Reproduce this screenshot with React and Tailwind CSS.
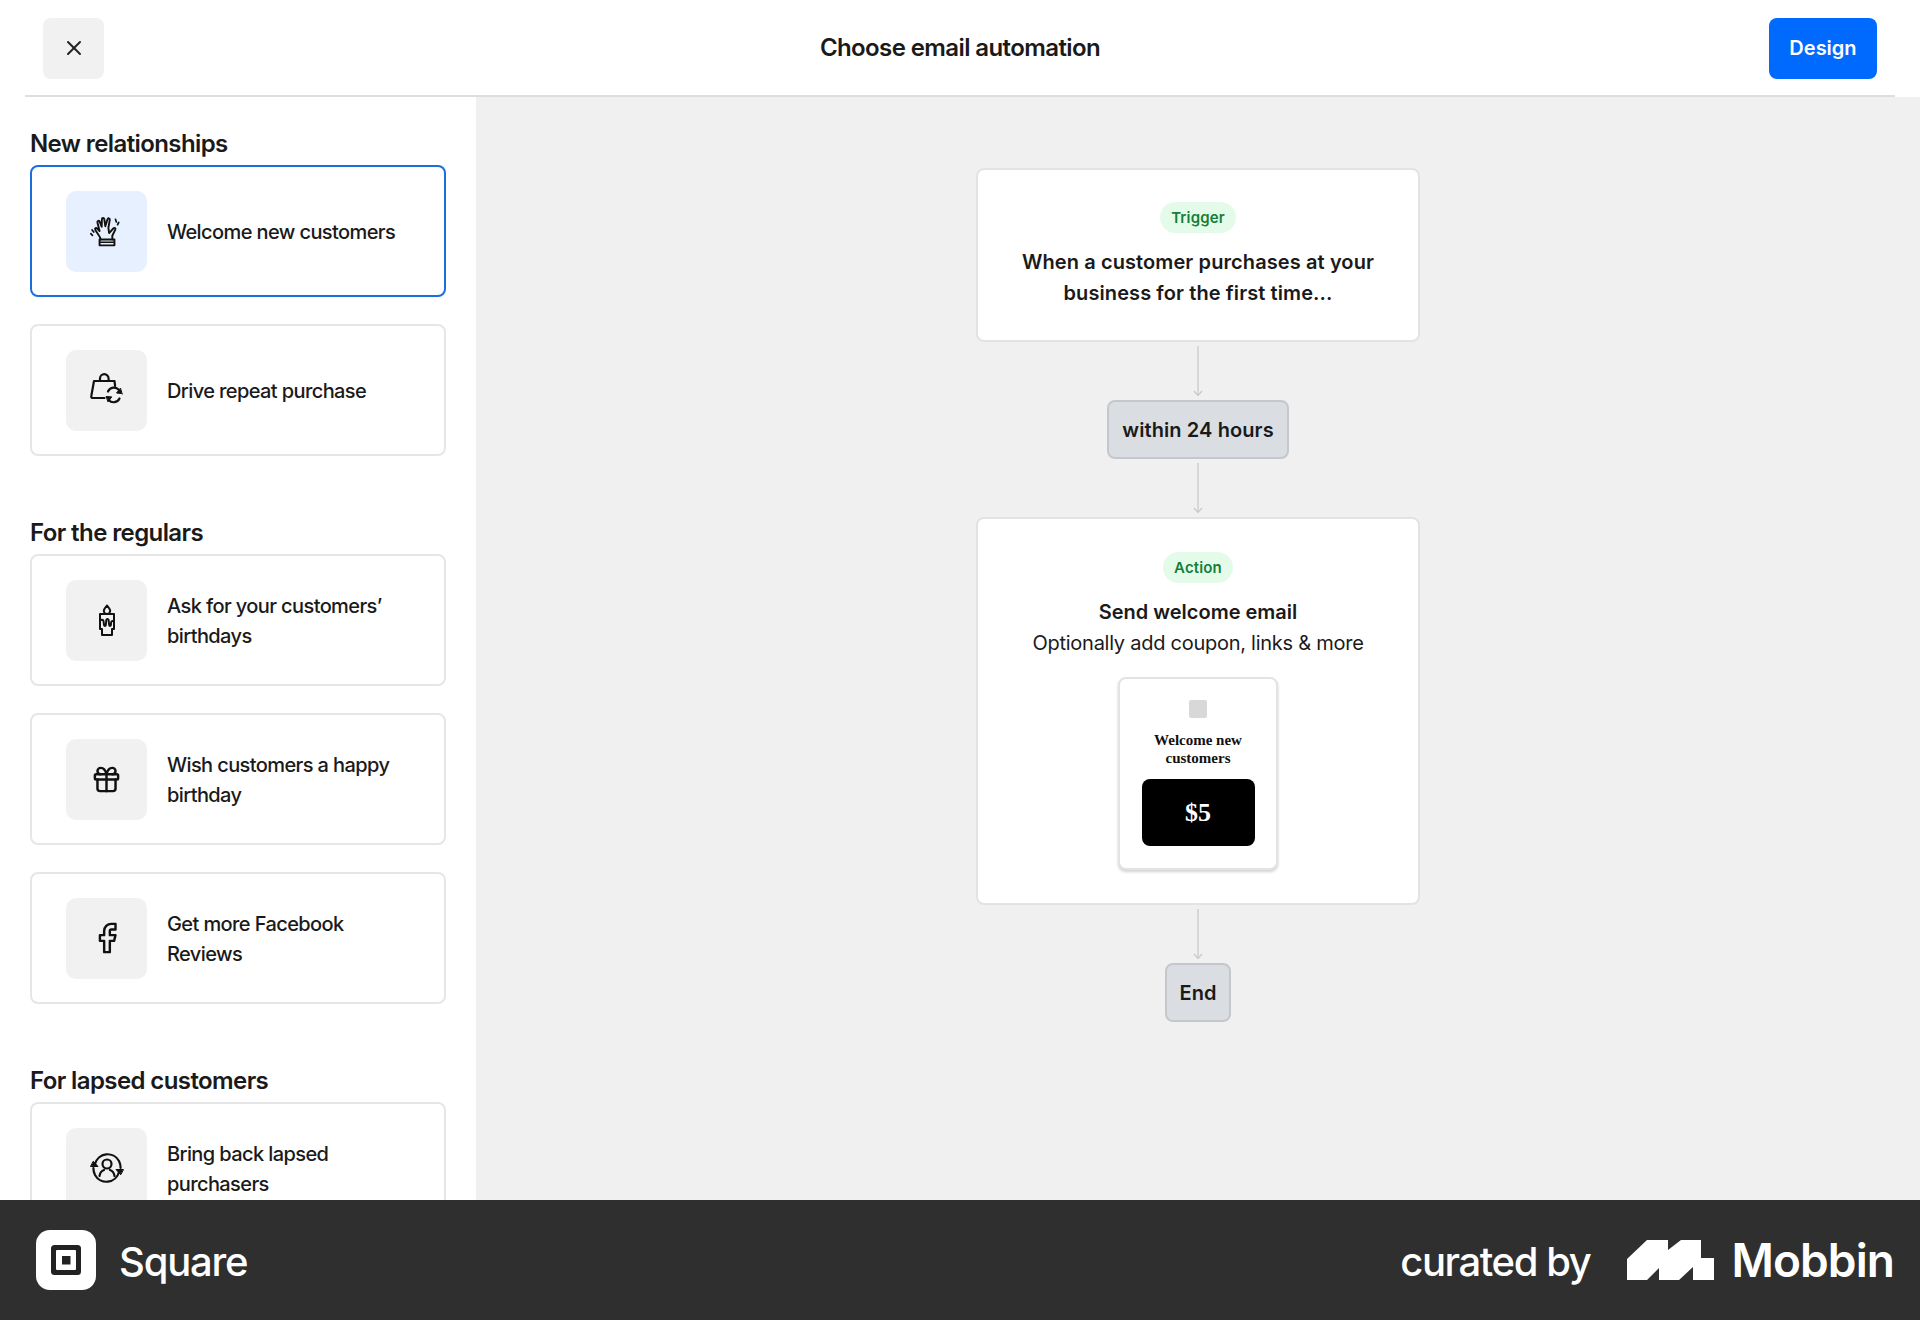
import React from 'react';
import { X, Gift, Facebook } from 'lucide-react';

const inter = { fontFamily: 'Inter, sans-serif' };

const HandIcon = () => (
  <svg width="34" height="34" viewBox="0 0 32 32" fill="none" stroke="#111" strokeWidth="1.8" strokeLinecap="round" strokeLinejoin="round">
    <path d="M10 24c0-3-3-5-5-9-.8-1.600.8-2.400 1.800-1.200L9 16 7 8c-.4-1.600 1.600-2.200 2.200-.6L11 12l.2-7c0-1.600 2-1.600 2.300 0l.9 6.500L16.500 5c.5-1.500 2.400-1 2.100.5L17.300 13l.7 5 4-4.500c1-1 2.400 0 1.800 1.200L21 20.500V24" />
    <path d="M9 24h14v5.500H9z" />
    <path d="M9.500 26.500h13" strokeWidth="1.400" />
    <path d="M2 15l1.500 2M.8 18.500l1.500 1.600M24 5l.8 2.500M27 8l-1 2" strokeWidth="1.600" />
  </svg>
);

const BagIcon = () => (
  <svg width="34" height="34" viewBox="0 0 34 34" fill="none" stroke="#111" strokeWidth="2.200" strokeLinecap="round" strokeLinejoin="round">
    <path d="M14.500 25H3c-1.400 0-2-.8-1.700-2L4 8h20.500l.6 5" />
    <path d="M10 8V5.500a4.300 4.300 0 0 1 8.600 0V8" />
    <path d="M18 18.500a6.500 6.500 0 0 1 11-1.500" />
    <path d="M32 21c0 0-.2-.2-.3-.4l-5.200-.6 3.800-4.600z" fill="#111" strokeWidth="1" />
    <path d="M29.500 25.500a6.500 6.500 0 0 1-10.800 1.500" />
    <path d="M16.500 23.500l5.300.4-3.600 4.700z" fill="#111" strokeWidth="1" />
  </svg>
);

const CandleIcon = () => (
  <svg width="32" height="32" viewBox="0 0 32 32" fill="none" stroke="#111" strokeWidth="2" strokeLinecap="round" strokeLinejoin="round">
    <path d="M16 1.500c2 2.300 3.200 3.600 3.200 5.200a3.200 3.200 0 0 1-6.400 0c0-1.600 1.200-2.900 3.200-5.200z" />
    <path d="M9 10h14v15h-2v6H11v-6H9z" />
    <path d="M9 24v-6.500c0-2 3-2.500 3.500-.5l.5 4c.4 1.300 1.600 1.300 1.800 0l.5-5c.3-1.500 2-1.500 2.300 0l.6 5c.2 1.300 1.400 1.300 1.700 0l.3-3c.3-1.500 2.800-1.500 2.800 0" />
  </svg>
);

const LapsedIcon = () => (
  <svg width="34" height="34" viewBox="0 0 34 34" fill="none" stroke="#111" strokeWidth="2.200" strokeLinecap="round" strokeLinejoin="round">
    <path d="M5 13a13 13 0 0 1 24-3c1 2 1.600 4 1.600 7" />
    <path d="M29 21a13 13 0 0 1-24 3c-1-2-1.600-4-1.600-7" />
    <path d="M3.500 10.500l4.500 5H.8z" fill="#111" strokeWidth="1" />
    <path d="M30.500 23.500l-4.500-5h7.200z" fill="#111" strokeWidth="1" />
    <circle cx="17" cy="13" r="4.500" />
    <path d="M9.500 25c.5-3.500 3-5.500 4.500-6M24.500 25c-.5-3.500-3-5.500-4.500-6" />
  </svg>
);

const sections = [
  {
    title: 'New relationships',
    items: [
      { label: 'Welcome new customers', icon: <HandIcon />, active: true },
      { label: 'Drive repeat purchase', icon: <BagIcon /> },
    ],
  },
  {
    title: 'For the regulars',
    items: [
      { label: 'Ask for your customers’ birthdays', icon: <CandleIcon /> },
      { label: 'Wish customers a happy birthday', icon: <Gift size={31} strokeWidth={1.9} color="#111" /> },
      { label: 'Get more Facebook Reviews', icon: <Facebook size={34} strokeWidth={1.7} color="#111" /> },
    ],
  },
  {
    title: 'For lapsed customers',
    items: [{ label: 'Bring back lapsed purchasers', icon: <LapsedIcon /> }],
  },
];

const AutomationCard = ({ label, icon, active }) => (
  <div
    className={
      active
        ? 'flex items-center h-[132px] shrink-0 rounded-lg bg-white border-2 border-[#1a6fe0] pl-[34px]'
        : 'flex items-center h-[132px] shrink-0 rounded-lg bg-white border-2 border-[#e6e6e6] pl-[34px]'
    }
  >
    <div
      className={
        active
          ? 'flex items-center justify-center w-[81px] h-[81px] rounded-[10px] bg-[#e6f0ff] shrink-0'
          : 'flex items-center justify-center w-[81px] h-[81px] rounded-[10px] bg-[#f1f1f1] shrink-0'
      }
    >
      {icon}
    </div>
    <p className="ml-[20px] mt-[2px] w-[240px] text-[20px] leading-[30.5px] font-medium tracking-[-0.03em] text-[#1a1a1a]">{label}</p>
  </div>
);

const Connector = () => (
  <svg width="16" height="50" viewBox="0 0 16 50" fill="none" stroke="#c9c9c9" strokeWidth="1.300" className="my-[4px] shrink-0">
    <path d="M8 0v49" />
    <path d="M4 45l4 4.500 4-4.500" />
  </svg>
);

const Pill = ({ children }) => (
  <span className="inline-block rounded-full bg-[#e5fbea] px-[11px] text-[15px] leading-[31px] font-semibold tracking-[0.01em] text-[#137f37]">{children}</span>
);

const App = () => {
  return (
    <div className="flex flex-col w-full h-screen overflow-hidden bg-white" style={inter}>
      {/* top bar */}
      <header className="flex items-center justify-between h-[97px] mx-[25px] pl-[18px] pr-[18px] pt-[1px] border-b-2 border-[#dedede] shrink-0">
        <div className="w-[108px]">
          <button className="flex items-center justify-center w-[61px] h-[61px] rounded-lg bg-[#f1f1f1]">
            <X size={24} strokeWidth={2} color="#222" />
          </button>
        </div>
        <h1 className="text-[24px] font-semibold tracking-[-0.025em] text-[#1a1a1a]">Choose email automation</h1>
        <button className="w-[108px] h-[61px] rounded-lg bg-[#006aff] text-white text-[20px] font-semibold">Design</button>
      </header>

      <div className="flex flex-1 min-h-0">
        {/* left list */}
        <aside className="w-[476px] shrink-0 overflow-hidden bg-white pl-[30px] pr-[30px] pt-[32px]">
          {sections.map((s) => (
            <section key={s.title} className="mb-[62px]">
              <h2 className="text-[24px] leading-[30px] mb-[6px] font-semibold tracking-[-0.025em] text-[#1a1a1a]">{s.title}</h2>
              <div className="flex flex-col gap-[27px]">
                {s.items.map((item) => (
                  <AutomationCard key={item.label} {...item} />
                ))}
              </div>
            </section>
          ))}
        </aside>

        {/* flow */}
        <main className="flex-1 flex flex-col items-center bg-[#f0f0f0] pt-[71px] overflow-hidden">
          <div className="w-[444px] h-[174px] shrink-0 rounded-lg border-2 border-[#e3e3e3] bg-white pt-[32px] text-center">
            <Pill>Trigger</Pill>
            <p className="mt-[14px] px-[30px] text-[20px] leading-[30.5px] font-semibold tracking-[0.005em] text-[#1a1a1a]">
              When a customer purchases at your business for the first time...
            </p>
          </div>
          <Connector />
          <div className="h-[59px] px-[13px] shrink-0 flex items-center rounded-lg border-2 border-[#c4c8cc] bg-[#dadee3] text-[20px] font-semibold tracking-[0.005em] text-[#1a1a1a]">
            within 24 hours
          </div>
          <Connector />
          <div className="w-[444px] h-[388px] shrink-0 flex flex-col items-center rounded-lg border-2 border-[#e3e3e3] bg-white pt-[33px]">
            <Pill>Action</Pill>
            <p className="mt-[14px] text-[20px] leading-[30.5px] font-semibold text-[#1a1a1a]">Send welcome email</p>
            <p className="text-[20px] leading-[30.5px] tracking-[-0.013em] text-[#1a1a1a]">Optionally add coupon, links &amp; more</p>
            <div className="mt-[19px] w-[160px] h-[193px] flex flex-col items-center rounded-lg border-2 border-[#e3e3e3] bg-white pt-[21px] shadow-[0_2px_3px_rgba(0,0,0,0.18)]">
              <div className="w-[18px] h-[18px] rounded-[2px] bg-[#d8d8d8]"></div>
              <p className="mt-[13px] text-center text-[15px] leading-[18px] font-bold text-[#111]" style={{ fontFamily: '"Liberation Serif", serif' }}>
                Welcome new<br />customers
              </p>
              <div className="mt-[12px] flex items-center justify-center w-[113px] h-[67px] rounded-lg bg-black text-white text-[26px] font-bold" style={{ fontFamily: '"Liberation Serif", serif' }}>
                $5
              </div>
            </div>
          </div>
          <Connector />
          <div className="h-[59px] px-[13px] shrink-0 flex items-center rounded-lg border-2 border-[#c4c8cc] bg-[#dadee3] text-[20px] font-semibold text-[#1a1a1a]">
            End
          </div>
        </main>
      </div>

      {/* footer */}
      <footer className="flex items-center justify-between h-[120px] shrink-0 bg-[#2f2f2f] pl-[36px] pr-[26px]">
        <div className="flex items-center">
          <svg width="60" height="60" viewBox="0 0 60 60">
            <rect width="60" height="60" rx="14" fill="#fff" />
            <rect x="15" y="15" width="30" height="30" rx="3.500" fill="#222" />
            <rect x="20" y="20" width="20" height="20" rx="1" fill="#fff" />
            <rect x="26" y="26" width="8.500" height="8.500" fill="#222" />
          </svg>
          <span className="ml-[23px] pt-[4px] text-[40px] font-medium tracking-[-0.03em] text-white">Square</span>
        </div>
        <div className="flex items-center">
          <span className="pt-[4px] text-[40px] font-medium tracking-[-0.035em] text-white">curated by</span>
          <svg width="87" height="40" viewBox="0 0 87 40" className="ml-[37px]">
            <path d="M0 40V19L20 0H41V10L54 0H74V18H87V40H66V27L52 40H32V28L20 40Z" fill="#fff" />
          </svg>
          <span className="ml-[17px] pt-[1px] text-[46px] font-semibold tracking-[-0.02em] text-white">Mobbin</span>
        </div>
      </footer>
    </div>
  );
};

export default App;
